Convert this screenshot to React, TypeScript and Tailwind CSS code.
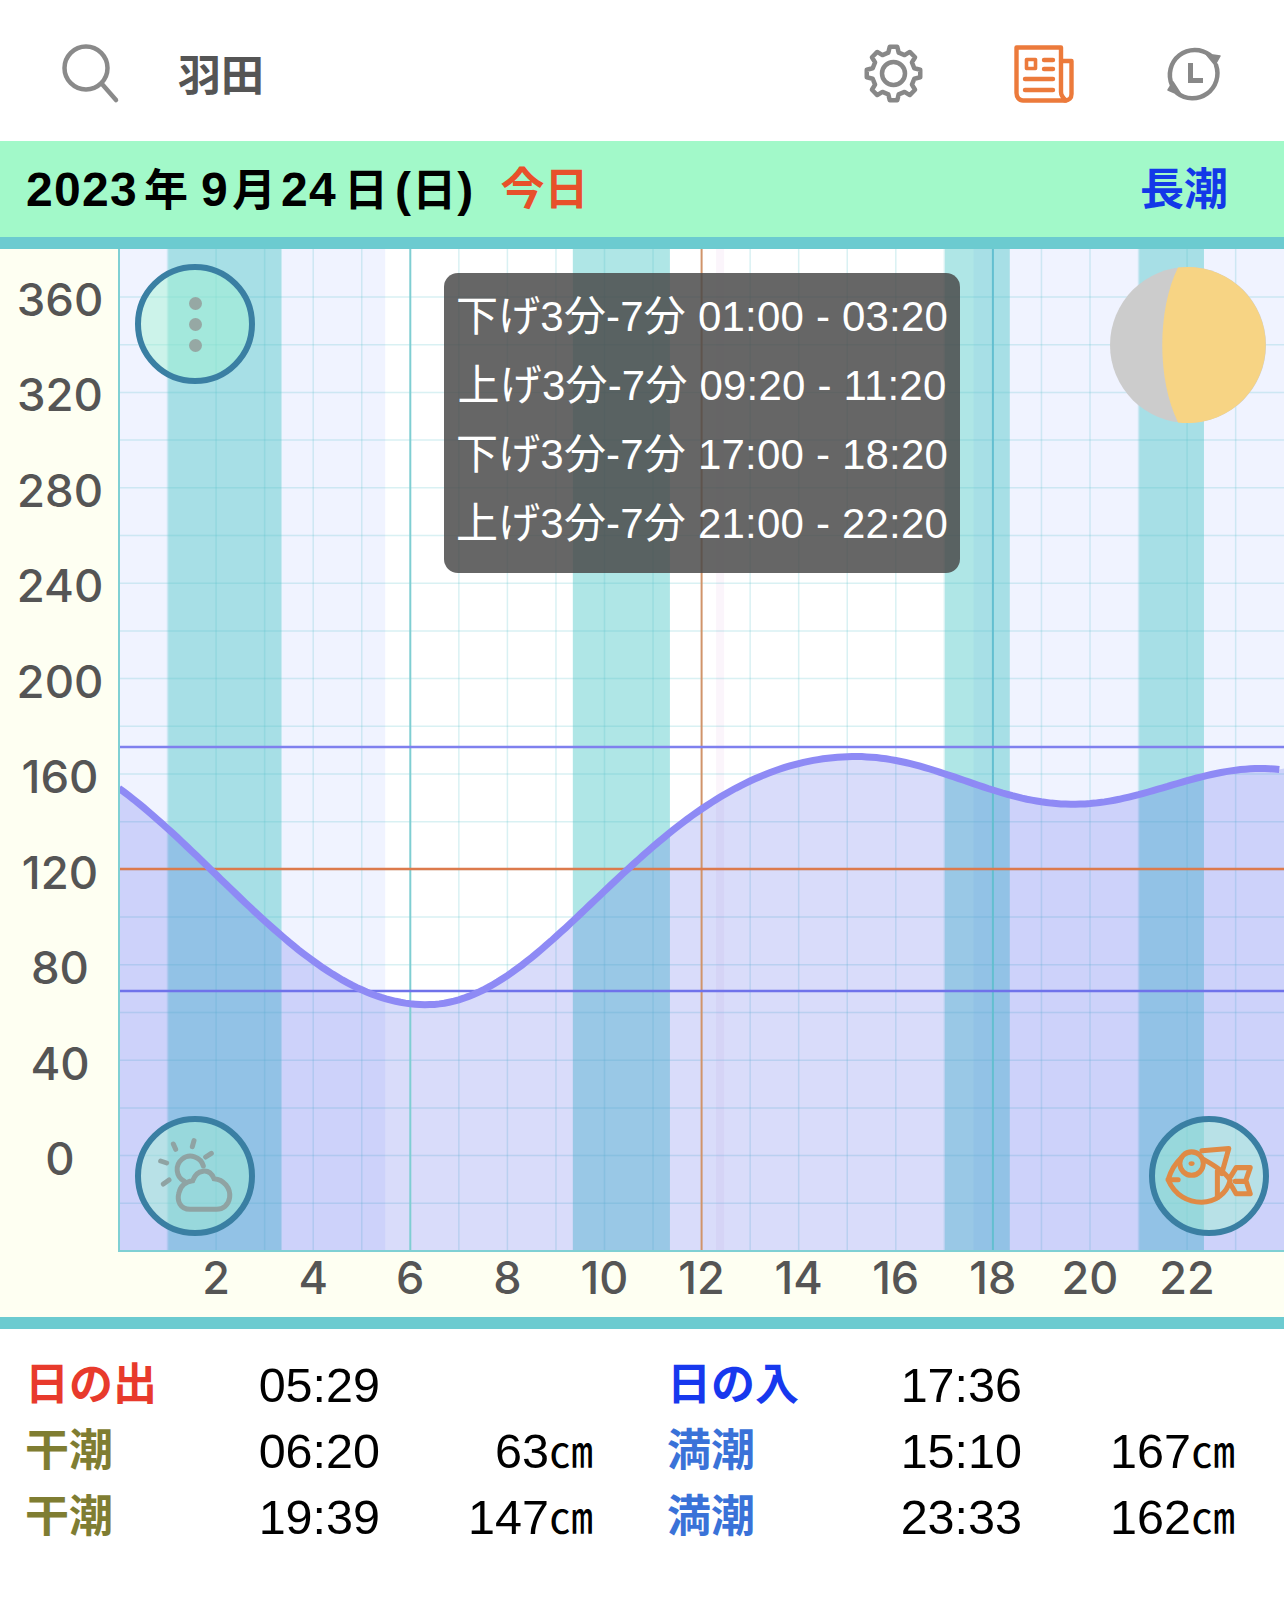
const X = (h: number) => 1 + 48.55 * h;
const Y = (cm: number) => 906 - 2.386 * cm;
const EXT: [number, number][] = [[-2.33, 172], [6.33, 63], [15.167, 167], [19.65, 147], [23.55, 162], [26, 152]];
const tide = (t: number) => {
  for (let i = 0; i < EXT.length - 1; i++) {
    const [a, va] = EXT[i];
    const [b, vb] = EXT[i + 1];
    if (t >= a && t <= b) {
      let u = (t - a) / (b - a);
      if (i === 1) u = u + 0.06 * Math.sin(Math.PI * u);
      const k = (1 - Math.cos(Math.PI * u)) / 2;
      return va + (vb - va) * k;
    }
  }
  return 0;
};
const pts: string[] = [];
for (let t = 0; t <= 24; t += 0.1) pts.push(`${X(t).toFixed(1)} ${Y(tide(t)).toFixed(1)}`);
const curve = "M" + pts.join(" L");
const W = 1166;
const H = 1003;
const hLines = Array.from({ length: 20 }, (_, k) => 1002 - 47.7 * (k + 1));
const vLines = Array.from({ length: 23 }, (_, k) => k + 1).filter((h) => h !== 6 && h !== 12 && h !== 18);
const BANDS = [[1, 3.333], [9.333, 11.333], [17, 18.333], [21, 22.333]];

const gear = (() => {
  const c = 29.5;
  let d = "";
  for (let i = 0; i < 8; i++) {
    const th = (i * Math.PI) / 4 - Math.PI / 2;
    const p = (r: number, off: number) => {
      const a = th + (off * Math.PI) / 180;
      return `${(c + r * Math.cos(a)).toFixed(2)} ${(c + r * Math.sin(a)).toFixed(2)}`;
    };
    d += `${i === 0 ? "M" : "L"}${p(21.5, -14)} L${p(27, -8)} L${p(27, 8)} L${p(21.5, 14)} `;
  }
  return d + "Z";
})();

function Search() {
  return (
    <svg width="60" height="62" viewBox="0 0 60 62" fill="none" stroke="#8a8a8a" strokeWidth="4.5" strokeLinecap="round">
      <circle cx="25" cy="25" r="21.5" />
      <path d="M41 41 L55 57" />
    </svg>
  );
}
function Gear() {
  return (
    <svg width="59" height="59" viewBox="0 0 59 59" fill="none" stroke="#888" strokeWidth="4.5" strokeLinejoin="round">
      <path d={gear} />
      <circle cx="29.5" cy="29.5" r="11.5" />
    </svg>
  );
}
function News() {
  return (
    <svg width="60" height="58" viewBox="0 0 60 58" fill="none" stroke="#ec7a3b" strokeWidth="4.4" strokeLinecap="round" strokeLinejoin="round">
      <path d="M2.5 2.5 H47 V47 C47 50 49 53 52 55.5 H9 C5 55.5 2.5 52 2.5 48 Z" />
      <path d="M47 16 H57.5 V49 C57.5 53 55 55.5 51 55.5" />
      <rect x="12.5" y="14.5" width="9" height="9" strokeWidth="3.6" />
      <path d="M30 15 H39 M30 24 H39 M11 34 H39 M11 45 H39" />
    </svg>
  );
}
function History() {
  return (
    <svg width="60" height="58" viewBox="0 0 60 58" fill="none" stroke="#888" strokeWidth="4.5" strokeLinecap="round" strokeLinejoin="round">
      <path d="M8 40 A25 25 0 0 1 46 10" />
      <path d="M52 20 A25 25 0 0 1 13 48" />
      <path d="M42 9 L56 11 L51 20 Z" fill="#888" strokeWidth="1.5" />
      <path d="M18 51 L4 45 L9 37 Z" fill="#888" strokeWidth="1.5" />
      <path d="M26.5 18 V35.5 H39" strokeWidth="5" strokeLinecap="butt" strokeLinejoin="miter" />
    </svg>
  );
}
function Weather() {
  return (
    <svg className="absolute left-[-6px] top-[-6px]" width="120" height="120" viewBox="405 108 360 360" fill="none" stroke="#8fa3a3" strokeWidth="15" strokeLinecap="round">
      <path d="M520 192 L527 208 M582 182 L577 200 M634 220 L617 231 M482 243 L500 249 M490 312 L507 300" />
      <path d="M553 304 A40 40 0 1 1 610 258" />
      <path d="M570 388 C540 388 530 362 537 338 C541 318 558 304 578 302 C590 268 628 262 642 296 C672 298 692 325 689 352 C686 376 668 388 650 388 Z" />
    </svg>
  );
}
function Fish() {
  return (
    <svg className="absolute left-[-6px] top-[-6px]" width="120" height="120" viewBox="448 108 358 358" fill="none" stroke="#e08a45" strokeWidth="15" strokeLinecap="round" strokeLinejoin="round">
      <circle cx="575" cy="250" r="35" />
      <ellipse cx="575" cy="250" rx="9" ry="7" fill="#e08a45" stroke="none" />
      <path d="M545 232 C525 250 512 275 505 298 L535 298 M505 298 C525 345 565 365 605 365 C645 365 680 340 690 300 C680 280 655 262 612 238" />
      <path d="M606 212 L686 205 L665 280" />
      <path d="M652 272 V352" />
      <path d="M692 288 L708 262 H750 L737 300 L750 340 H708 L692 312 M705 303 H737" />
    </svg>
  );
}

const Round = ({ className, children }: { className: string; children?: React.ReactNode }) => (
  <div className={`absolute h-[120px] w-[120px] rounded-full border-[6px] border-[#3a7fa3] bg-[#a0f3d1]/45 ${className}`}>{children}</div>
);

function Row({ l, lc, t, v, l2, lc2, t2, v2 }: { l: string; lc: string; t: string; v?: string; l2: string; lc2: string; t2: string; v2?: string }) {
  return (
    <div className="flex h-[66px] items-center text-[48.5px] text-black">
      <span className={`w-[183px] text-[44px] font-bold ${lc}`}>{l}</span>
      <span className="w-[172px] text-right">{t}</span>
      <span className="w-[213px] text-right">{v ?? ""}{v ? <span className="font-['Noto_Sans_CJK_JP'] text-[44px]">㎝</span> : null}</span>
      <span className="w-[74px]" />
      <span className={`w-[183px] text-[44px] font-bold ${lc2}`}>{l2}</span>
      <span className="w-[172px] text-right">{t2}</span>
      <span className="w-[213px] text-right">{v2 ?? ""}{v2 ? <span className="font-['Noto_Sans_CJK_JP'] text-[44px]">㎝</span> : null}</span>
    </div>
  );
}

const SLOTS = [
  "下げ3分-7分 01:00 - 03:20",
  "上げ3分-7分 09:20 - 11:20",
  "下げ3分-7分 17:00 - 18:20",
  "上げ3分-7分 21:00 - 22:20",
];

export default function App() {
  return (
    <div className="h-[1605px] w-[1284px] overflow-hidden bg-white font-['Liberation_Sans','Noto_Sans_CJK_JP',sans-serif]">
      <header className="relative flex h-[141px] items-center">
        <div className="ml-[61px] mt-[7px] w-[117px]"><Search /></div>
        <span className="mt-[3px] font-['Noto_Sans_CJK_JP'] text-[43px] font-bold text-[#555] leading-none">羽田</span>
        <div className="ml-auto mr-[60px] mt-[6px] flex items-center gap-[90.5px]">
          <Gear />
          <News />
          <History />
        </div>
      </header>

      <div className="flex h-[108px] items-center border-b-[12px] border-[#6ccbd0] bg-[#a2f9c9] pl-[26px] pr-[56px] pt-[1px]">
        <span className="text-[48px] font-bold tracking-[1.3px] text-black whitespace-nowrap">
          2023
          <span className="ml-[6px] mr-[13px] text-[44px] tracking-normal">年</span>
          9
          <span className="ml-[3px] mr-[5px] text-[44px] tracking-normal">月</span>
          24
          <span className="ml-[7px] mr-[7px] text-[44px] tracking-normal">日</span>
          (
          <span className="text-[44px] tracking-normal">日</span>
          <span className="ml-[1px]">)</span>
        </span>
        <span className="ml-[26px] text-[44px] font-bold text-[#e8502a]">今日</span>
        <span className="ml-auto text-[44px] font-bold text-[#1338e8]">長潮</span>
      </div>

      <div className="flex h-[1003px]">
        <div className="flex w-[118px] flex-col bg-[#fefff2] pt-[3px] font-['Inter'] text-[45.5px] font-medium text-[#555]">
          {["360", "320", "280", "240", "200", "160", "120", "80", "40", "0"].map((s) => (
            <div key={s} className="flex h-[95.5px] items-center justify-center pl-[2px]">{s}</div>
          ))}
        </div>
        <div className="relative w-[1166px]">
          <svg width={W} height={H} viewBox={`0 0 ${W} ${H}`} className="block">
            <rect width={W} height={H} fill="#fff" />
            <rect x={0} width={X(5.483)} height={H} fill="#f0f3ff" />
            <rect x={X(17.6)} width={W - X(17.6)} height={H} fill="#f0f3ff" />
            <rect x={X(12.3)} width={8} height={H} fill="#fbf5fb" />
            {BANDS.map(([a, b]) => (
              <rect key={a} x={X(a) + 0.7} width={X(b) - X(a)} height={H} fill="#50c8c8" fillOpacity="0.46" />
            ))}
            {hLines.map((y) => (
              <line key={y} x1="0" x2={W} y1={y} y2={y} stroke="#50c0c8" strokeOpacity="0.22" strokeWidth="1.5" />
            ))}
            {vLines.map((h) => (
              <line key={h} x1={X(h)} x2={X(h)} y1="0" y2={H} stroke="#50c0c8" strokeOpacity="0.22" strokeWidth="1.5" />
            ))}
            <path d={`${curve} L${W} ${Y(162)} L${W} ${H} L0 ${H} L0 ${Y(tide(0))} Z`} fill="rgb(65,80,230)" fillOpacity="0.2" />
            <line x1={X(6)} x2={X(6)} y1="0" y2={H} stroke="#7fced2" strokeWidth="2" />
            <line x1={X(18)} x2={X(18)} y1="0" y2={H} stroke="#63bfd0" strokeWidth="2" />
            <line x1={X(12)} x2={X(12)} y1="0" y2={H} stroke="#d0946a" strokeWidth="2" />
            <line x1="0" x2={W} y1="498" y2="498" stroke="#7f80ee" strokeWidth="2.5" />
            <line x1="0" x2={W} y1="620" y2="620" stroke="#dc7a4c" strokeWidth="2.5" />
            <line x1="0" x2={W} y1="742" y2="742" stroke="#6f72ea" strokeWidth="2.5" />
            <path d={curve} fill="none" stroke="#8e8af5" strokeWidth="7" />
            <line x1="1" x2="1" y1="0" y2={H} stroke="#7fd0d4" strokeWidth="2" />
            <line x1="0" x2={W} y1={H - 1} y2={H - 1} stroke="#7fd0d4" strokeWidth="2" />
            <circle cx="1070" cy="96" r="78" fill="#cccccc" />
            <path d="M1060 18.6 A78 78 0 1 1 1060 173.4 C1039 131 1039 61 1060 18.6 Z" fill="#f7d484" />
          </svg>

          <div className="absolute left-[326px] top-[24px] flex h-[300px] w-[516px] flex-col justify-center rounded-[14px] bg-[#474747]/[.83] pb-[7px] text-center text-[42px] tracking-[0.2px] text-white">
            {SLOTS.map((s) => (
              <div key={s} className="h-[69px] leading-[69px] whitespace-nowrap">{s}</div>
            ))}
          </div>

          <Round className="left-[17px] top-[15px]">
            <div className="flex h-full flex-col items-center justify-center gap-[8px]">
              <span className="h-[13px] w-[13px] rounded-full bg-[#96a8a4]" />
              <span className="h-[13px] w-[13px] rounded-full bg-[#96a8a4]" />
              <span className="h-[13px] w-[13px] rounded-full bg-[#96a8a4]" />
            </div>
          </Round>
          <Round className="left-[17px] top-[867px]"><Weather /></Round>
          <Round className="left-[1031px] top-[867px]"><Fish /></Round>
        </div>
      </div>

      <div className="flex h-[65px] items-center bg-[#fefff2] pb-[14px] pl-[167.5px] font-['Inter'] text-[45px] font-medium text-[#555]">
        {["2", "4", "6", "8", "10", "12", "14", "16", "18", "20", "22"].map((s) => (
          <div key={s} className="w-[97.1px] text-center">{s}</div>
        ))}
      </div>

      <div className="border-t-[12px] border-[#6ccbd0] pl-[25px] pt-[23px]">
        <Row l="日の出" lc="text-[#e83a2c]" t="05:29" l2="日の入" lc2="text-[#1738ee]" t2="17:36" />
        <Row l="干潮" lc="text-[#7f7d32]" t="06:20" v="63" l2="満潮" lc2="text-[#3a72d8]" t2="15:10" v2="167" />
        <Row l="干潮" lc="text-[#7f7d32]" t="19:39" v="147" l2="満潮" lc2="text-[#3a72d8]" t2="23:33" v2="162" />
      </div>
    </div>
  );
}
